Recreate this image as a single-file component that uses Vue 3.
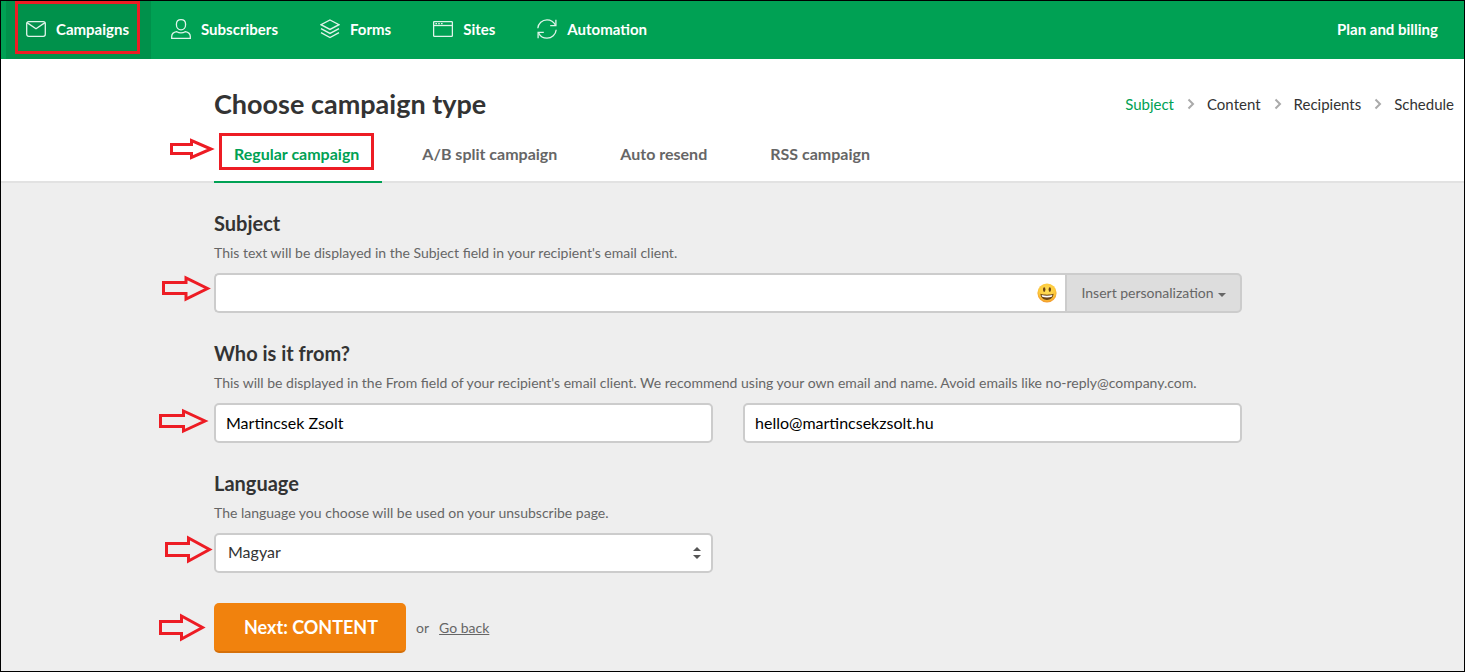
<script setup>
import { ref } from 'vue'

const navItems = [
  { label: 'Campaigns', icon: 'mail', active: true },
  { label: 'Subscribers', icon: 'user' },
  { label: 'Forms', icon: 'layers' },
  { label: 'Sites', icon: 'window' },
  { label: 'Automation', icon: 'refresh' },
]
const steps = ['Subject', 'Content', 'Recipients', 'Schedule']
const tabs = ['Regular campaign', 'A/B split campaign', 'Auto resend', 'RSS campaign']

const subject = ref('')
const senderName = ref('Martincsek Zsolt')
const senderEmail = ref('hello@martincsekzsolt.hu')
const language = ref('Magyar')

const arrows = [
  'M171.5 144.5H191.5V140.5L211 149L191.5 157.5V153.5H171.5Z',
  'M163.5 282.5H186V278L207.5 288.5L186 299V293.5H163.5Z',
  'M160.5 415.5H183.5V411L205 421L183.5 431V426.5H160.5Z',
  'M166.5 543.5H188.5V538L209.5 549.5L188.5 561V555.5H166.5Z',
  'M160.5 621.5H181.5V616L202.5 627.5L181.5 639V633.5H160.5Z',
]
</script>

<template>
  <div class="page">
    <header class="topbar">
      <nav class="nav">
        <a v-for="item in navItems" :key="item.label" href="#" class="nav-item" :class="{ active: item.active }">
          <svg class="nav-icon" viewBox="0 0 20 20" aria-hidden="true">
            <g v-if="item.icon === 'mail'">
              <rect x="0.7" y="2.7" width="18.6" height="14.6" rx="2" />
              <path d="M1 3.6L10 9.8L19 3.6" />
            </g>
            <g v-else-if="item.icon === 'user'">
              <path d="M10 0.7C7 0.7 5.4 2.6 5.4 5.4C5.4 8.4 7.3 10.8 10 10.8C12.7 10.8 14.6 8.4 14.6 5.4C14.6 2.6 13 0.7 10 0.7Z" />
              <path d="M0.7 19.3V17.5C0.7 14.6 3 13.2 5.8 12.7C7 13.4 8.4 13.8 10 13.8C11.6 13.8 13 13.4 14.2 12.7C17 13.2 19.3 14.6 19.3 17.5V19.3Z" />
            </g>
            <g v-else-if="item.icon === 'layers'">
              <path d="M10 1L19 5.7L10 10.4L1 5.7Z" />
              <path d="M1 9.6L10 14.4L19 9.6" />
              <path d="M1 13.6L10 18.6L19 13.6" />
            </g>
            <g v-else-if="item.icon === 'window'">
              <rect x="0.6" y="2.6" width="18.8" height="14.8" rx="0.8" />
              <path d="M0.6 6.5H19.4" />
              <path d="M2.4 4.6H4M5.2 4.6H6.8M8 4.6H9.6" />
            </g>
            <g v-else>
              <path d="M0.8 9.2C1.2 4.3 5.2 0.8 10 0.8C13.6 0.8 16.8 2.8 18.4 6" />
              <path d="M18.9 0.8V6.6H13.2" />
              <path d="M19.2 10.8C18.8 15.7 14.8 19.2 10 19.2C6.4 19.2 3.2 17.2 1.6 14" />
              <path d="M1.1 19.2V13.4H6.8" />
            </g>
          </svg>
          <span>{{ item.label }}</span>
        </a>
      </nav>
      <a href="#" class="billing">Plan and billing</a>
      <div class="mark mark-nav" aria-hidden="true"></div>
    </header>

    <section class="heading">
      <div class="title-row">
        <h1>Choose campaign type</h1>
        <ol class="steps">
          <li v-for="(step, i) in steps" :key="step">
            <svg v-if="i > 0" class="chevron" viewBox="0 0 8 12" aria-hidden="true"><path d="M1.5 1.5L6 6L1.5 10.5" /></svg>
            <a href="#" :class="{ current: i === 0 }">{{ step }}</a>
          </li>
        </ol>
      </div>
      <nav class="tabs">
        <a v-for="(tab, i) in tabs" :key="tab" href="#" class="tab" :class="{ selected: i === 0 }">{{ tab }}
          <span v-if="i === 0" class="mark mark-tab" aria-hidden="true"></span>
        </a>
      </nav>
    </section>

    <form class="form" @submit.prevent>
      <div class="group">
        <h2><label for="subject">Subject</label></h2>
        <p>This text will be displayed in the Subject field in your recipient's email client.</p>
        <div class="joined">
          <input id="subject" v-model="subject" type="text" class="control" />
          <button type="button" class="emoji" aria-label="Insert emoji">
            <svg viewBox="0 0 20 20" aria-hidden="true">
              <defs>
                <radialGradient id="face" cx="0.5" cy="0.4" r="0.6">
                  <stop offset="0" stop-color="#ffe05a" />
                  <stop offset="0.7" stop-color="#fdc93b" />
                  <stop offset="1" stop-color="#f0932a" />
                </radialGradient>
              </defs>
              <circle cx="10" cy="10" r="9.6" fill="url(#face)" />
              <ellipse cx="7.2" cy="6.6" rx="1.2" ry="2.4" fill="#6b4315" />
              <ellipse cx="12.8" cy="6.6" rx="1.2" ry="2.4" fill="#6b4315" />
              <path d="M3.4 10.8C7 12 13 12 16.6 10.8C16.2 14.8 13.6 17 10 17C6.4 17 3.8 14.8 3.4 10.8Z" fill="#6b4315" />
              <path d="M4.6 12C8 12.9 12 12.9 15.4 12L14.8 13.8C12 14.6 8 14.6 5.2 13.8Z" fill="#fff" />
            </svg>
          </button>
          <button type="button" class="personalize">Insert personalization<span class="caret"></span></button>
        </div>
      </div>

      <div class="group">
        <h2>Who is it from?</h2>
        <p>This will be displayed in the From field of your recipient's email client. We recommend using your own email and name. Avoid emails like no-reply@company.com.</p>
        <div class="columns">
          <input v-model="senderName" type="text" class="control" aria-label="Sender name" />
          <input v-model="senderEmail" type="email" class="control" aria-label="Sender email" />
        </div>
      </div>

      <div class="group">
        <h2><label for="language">Language</label></h2>
        <p>The language you choose will be used on your unsubscribe page.</p>
        <div class="columns">
          <div class="select-wrap">
            <select id="language" v-model="language" class="control">
              <option>Magyar</option>
            </select>
            <svg class="updown" viewBox="0 0 8 12" aria-hidden="true"><path d="M0 4L4 0L8 4ZM0 8L4 12L8 8Z" /></svg>
          </div>
        </div>
      </div>

      <div class="actions">
        <button type="submit" class="next">Next: CONTENT</button>
        <span>or</span>
        <a href="#">Go back</a>
      </div>
    </form>

    <svg class="arrows" aria-hidden="true">
      <path v-for="d in arrows" :key="d" :d="d" />
    </svg>
  </div>
</template>

<style>
body {
  margin: 0;
}
</style>

<style scoped>
.page {
  box-sizing: border-box;
  position: relative;
  min-height: 100vh;
  border: 1px solid #000;
  background: #eee;
  color: #333;
  font-family: Lato, "Liberation Sans", sans-serif;
  font-size: 14px;
  line-height: 20px;
}
a {
  color: inherit;
  text-decoration: none;
}
.topbar {
  position: relative;
  display: flex;
  justify-content: space-between;
  height: 58px;
  padding: 0 26px 0 5px;
  background: #00a154;
  color: #fff;
  font-size: 15px;
  font-weight: 700;
}
.nav {
  display: flex;
}
.nav-item {
  display: flex;
  align-items: center;
  gap: 10px;
  padding: 0 22px 2px 20px;
}
.nav-item.active {
  background: #00914b;
}
.nav-icon {
  width: 20px;
  height: 20px;
  fill: none;
  stroke: #e0f4ea;
  stroke-width: 1.3;
}
.billing {
  align-self: center;
  padding-bottom: 2px;
}
.mark {
  position: absolute;
  box-sizing: border-box;
  border: 3px solid #ed1c24;
  pointer-events: none;
}
.mark-nav {
  left: 14px;
  top: 0;
  width: 125px;
  height: 53px;
}
.mark-tab {
  left: 5px;
  top: -11px;
  width: 155px;
  height: 37px;
}
.heading {
  padding: 30px 10px 0 213px;
  background: #fff;
  border-bottom: 2px solid #e2e2e2;
}
.title-row {
  display: flex;
  align-items: center;
  justify-content: space-between;
}
h1 {
  margin: 0;
  font-size: 27px;
  line-height: 30px;
}
.steps {
  display: flex;
  margin: 0;
  padding: 0;
  list-style: none;
  font-size: 15px;
}
.steps li {
  display: flex;
  align-items: center;
}
.current {
  color: #00a154;
}
.chevron {
  width: 8px;
  height: 12px;
  margin: 0 12px 0 13px;
  fill: none;
  stroke: #aaa;
  stroke-width: 2;
}
.tabs {
  display: flex;
  gap: 20px;
  padding-top: 25px;
  margin-bottom: -2px;
  color: #666;
  font-size: 16px;
  font-weight: 700;
}
.tab {
  position: relative;
  padding: 0 23px 17px 20px;
  border-bottom: 2px solid transparent;
}
.tab.selected {
  color: #00a154;
  border-bottom-color: #00a154;
}
.form {
  max-width: 1028px;
  margin: 0 20px 0 213px;
  padding-top: 30px;
}
.group {
  margin-bottom: 30px;
}
h2 {
  margin: 0 0 10px;
  font-size: 20px;
  line-height: 20px;
}
p {
  margin: 0 0 10px;
  color: #666;
}
.control {
  box-sizing: border-box;
  display: block;
  width: 100%;
  height: 40px;
  margin: 0;
  padding: 0 10px 2px;
  border: 2px solid #ccc;
  border-radius: 5px;
  outline: 0;
  background: #fff;
  color: #000;
  font: inherit;
  font-size: 16px;
}
.joined {
  position: relative;
  display: grid;
  grid-template-columns: 1fr 177px;
}
.joined .control {
  border-right: 0;
  border-radius: 5px 0 0 5px;
}
.emoji {
  position: absolute;
  right: 185px;
  top: 10px;
  width: 20px;
  height: 20px;
  padding: 0;
  border: 0;
  background: none;
}
.emoji svg {
  display: block;
}
.personalize {
  display: flex;
  align-items: center;
  justify-content: center;
  gap: 4px;
  padding: 0;
  border: 2px solid #ccc;
  border-radius: 0 5px 5px 0;
  background: #ddd;
  color: #666;
  font: inherit;
}
.caret {
  margin-top: 4px;
  border: 4px solid transparent;
  border-top-color: #666;
  border-bottom: 0;
}
.columns {
  display: grid;
  grid-template-columns: 1fr 1fr;
  gap: 30px;
}
.select-wrap {
  position: relative;
}
select.control {
  appearance: none;
  padding-left: 12px;
  color: #333;
}
.updown {
  position: absolute;
  right: 12px;
  top: 14px;
  width: 8px;
  height: 12px;
  fill: #555;
  pointer-events: none;
}
.actions {
  display: flex;
  align-items: center;
  gap: 10px;
  color: #666;
}
.actions a {
  text-decoration: underline;
}
.next {
  height: 50px;
  padding: 0 28px 0 30px;
  border: 0;
  border-bottom: 2px solid #d5700a;
  border-radius: 5px;
  background: #f1820d;
  color: #fff;
  font: inherit;
  font-size: 18px;
  font-weight: 700;
}
.arrows {
  position: absolute;
  left: -1px;
  top: -1px;
  width: 220px;
  height: 660px;
  fill: none;
  stroke: #ed1c24;
  stroke-width: 3;
  pointer-events: none;
}
</style>
